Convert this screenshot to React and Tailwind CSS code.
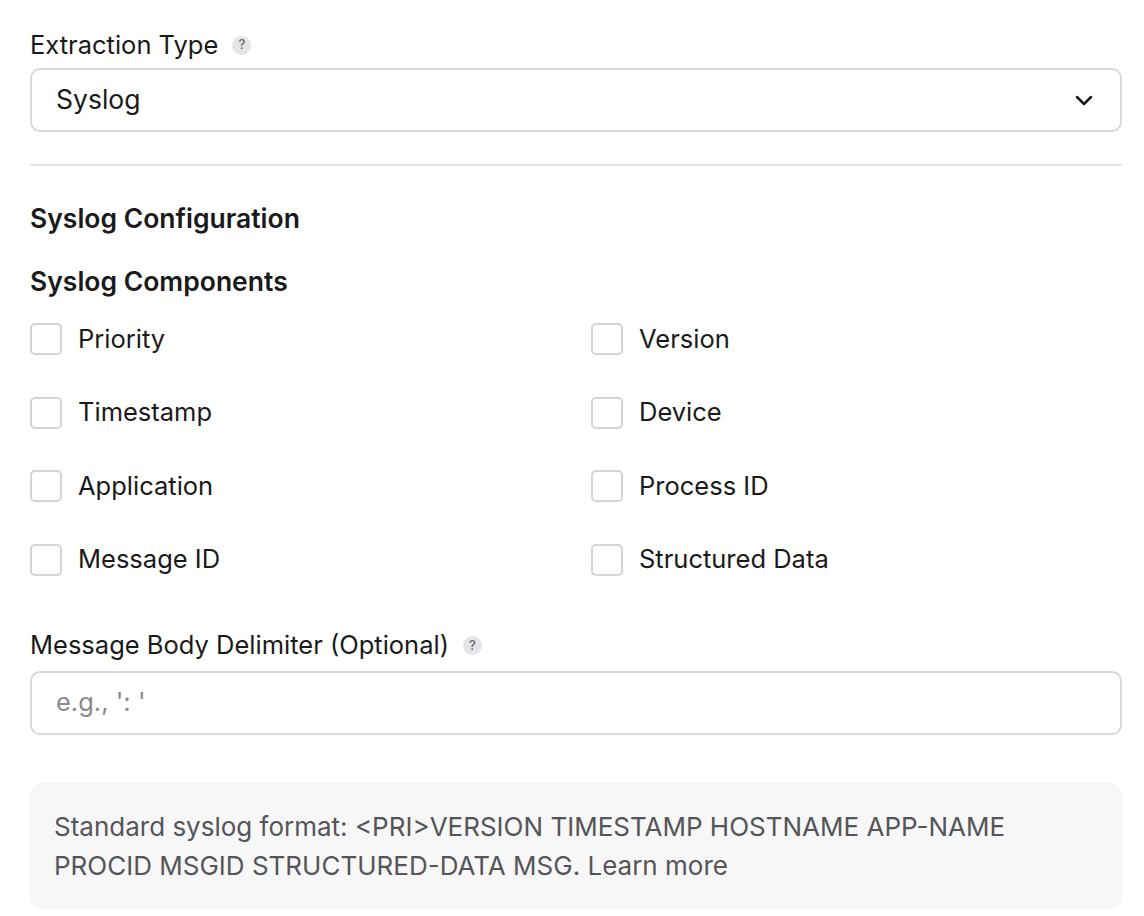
import React from "react";

const Q = () => (
  <span className="inline-flex items-center justify-center w-[19px] h-[19px] rounded-full bg-[#e5e5e7] text-[#6b6b6b] text-[13px] font-medium ml-[14px]">?</span>
);

const Box = ({ label }) => (
  <div className="flex items-center h-[34px]">
    <div className="w-[32px] h-[32px] rounded-[5px] border-2 border-[#d4d4d6] bg-white" />
    <span className="ml-[16px] text-[25.5px] text-[#1a1a1a]">{label}</span>
  </div>
);

export default function App() {
  const items = ["Priority", "Version", "Timestamp", "Device", "Application", "Process ID", "Message ID", "Structured Data"];
  return (
    <div className="w-[1144px] h-[916px] bg-white px-[30px] pr-[22px] pt-[28px] overflow-hidden" style={{ fontFamily: "Inter, 'Noto Sans', sans-serif" }}>
      <div className="flex items-center h-[34px] text-[25.5px] text-[#1a1a1a]">Extraction Type<Q /></div>
      <div className="mt-[6px] h-[64px] rounded-[10px] border-2 border-[#d9d9db] flex items-center justify-between px-[24px]">
        <span className="text-[26.5px] text-[#1a1a1a]">Syslog</span>
        <svg width="24" height="24" viewBox="0 0 24 24" fill="none" stroke="#1a1a1a" strokeWidth="2.5" strokeLinecap="round" strokeLinejoin="round"><path d="M5 9l7 7 7-7" /></svg>
      </div>
      <div className="mt-[32px] h-[2px] bg-[#e6e6e8]" />
      <div className="mt-[35px] text-[26.5px] font-semibold text-[#1a1a1a] leading-[34px]">Syslog Configuration</div>
      <div className="mt-[29px] text-[26.5px] font-semibold text-[#1a1a1a] leading-[34px]">Syslog Components</div>
      <div className="mt-[24px] grid grid-cols-2 gap-x-[30px] gap-y-[39.5px]">
        {items.map((l) => <Box key={l} label={l} />)}
      </div>
      <div className="mt-[52px] flex items-center h-[34px] text-[25.5px] text-[#1a1a1a]">Message Body Delimiter (Optional)<Q /></div>
      <div className="mt-[8px] h-[64px] rounded-[10px] border-2 border-[#d9d9db] flex items-center px-[24px]">
        <span className="text-[25.5px] text-[#8a8a8c]">e.g., ': '</span>
      </div>
      <div className="mt-[48px] rounded-[12px] bg-[#f7f7f8] pl-[24px] pr-[60px] py-[24px] text-[26px] leading-[39px] text-[#555558]">
        Standard syslog format: &lt;PRI&gt;VERSION TIMESTAMP HOSTNAME APP-NAME PROCID MSGID STRUCTURED-DATA MSG. Learn more
      </div>
    </div>
  );
}
